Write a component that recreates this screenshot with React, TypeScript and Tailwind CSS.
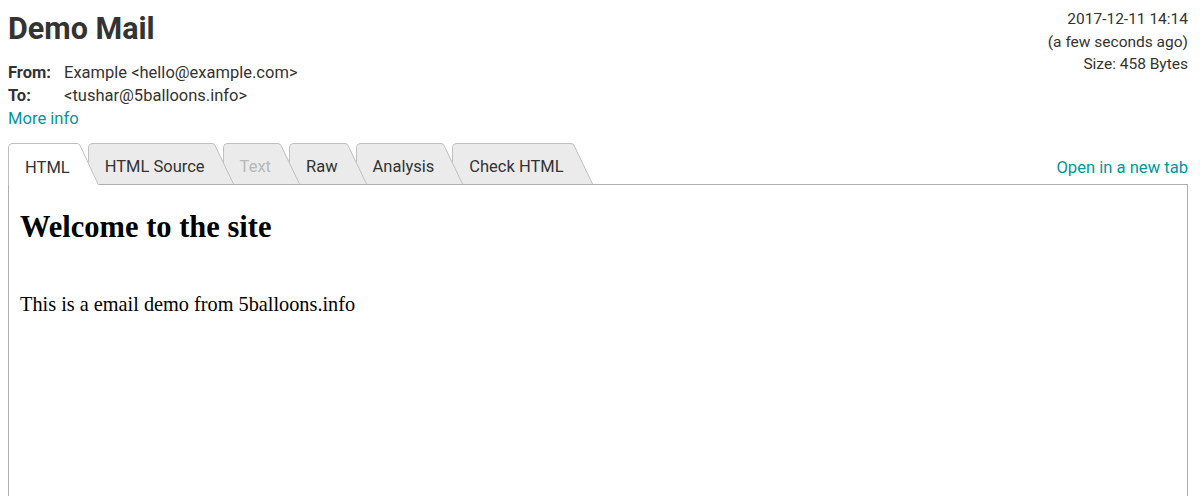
import React from 'react';

const ui = { fontFamily: 'Roboto, "Liberation Sans", Arial, sans-serif' };
const serif = { fontFamily: '"Liberation Serif", "Times New Roman", serif' };

type TabProps = {
  label: string;
  active?: boolean;
  disabled?: boolean;
  first?: boolean;
  z: string;
};

const Tab = ({ label, active, disabled, first, z }: TabProps) => {
  const h = active ? 42 : 41;
  const fill = active ? '#ffffff' : '#ebebeb';
  return (
    <div className={`relative flex ${z} ${first ? '' : '-ml-[11px]'} ${active ? 'h-[42px]' : 'h-[41px]'}`}>
      <div
        className={`flex items-center pl-4 pr-[6px] pt-[7px] border-l border-t border-[#c0c0c0] rounded-tl-[5px] text-[16.5px] whitespace-nowrap ${
          active ? 'bg-white' : 'bg-[#ebebeb]'
        } ${disabled ? 'text-[#b8b8b8]' : 'text-[#333]'}`}
      >
        {label}
      </div>
      <svg width="24" height={h} viewBox={`0 0 24 ${h}`} className="-ml-px block">
        <path d={`M0 0 H2 Q4.5 0 5.5 2.5 L24 ${h} H0 Z`} fill={fill} />
        <path d={`M0 0.5 H2 Q4.2 0.5 5.2 2.8 L23.5 ${h}`} fill="none" stroke="#c0c0c0" strokeWidth="1" />
      </svg>
    </div>
  );
};

const App = () => {
  return (
    <div className="min-h-screen bg-white pl-2 pr-[12px] text-[#333] overflow-hidden" style={ui}>
      {/* Header */}
      <div className="flex justify-between">
        <div>
          <h1 className="pt-3 text-[30.5px] leading-[34px] font-bold text-[#333]">Demo Mail</h1>
          <div className="mt-[15px] text-[16.5px] leading-[23px]">
            <div className="flex">
              <span className="w-[56px] font-bold">From:</span>
              <span>Example &lt;hello@example.com&gt;</span>
            </div>
            <div className="flex">
              <span className="w-[56px] font-bold">To:</span>
              <span>&lt;tushar@5balloons.info&gt;</span>
            </div>
            <a className="block text-[16.6px] text-[#00979d]">More info</a>
          </div>
        </div>
        <div className="pt-2 text-right text-[15.5px] leading-[22.5px]">
          <div>2017-12-11 14:14</div>
          <div>(a few seconds ago)</div>
          <div>Size: 458 Bytes</div>
        </div>
      </div>

      {/* Tabs */}
      <div className="relative z-10 mt-[13px] flex items-start justify-between h-[42px]">
        <div className="flex items-start">
          <Tab label="HTML" active first z="z-[6]" />
          <Tab label="HTML Source" z="z-[5]" />
          <Tab label="Text" disabled z="z-[4]" />
          <Tab label="Raw" z="z-[3]" />
          <Tab label="Analysis" z="z-[2]" />
          <Tab label="Check HTML" z="z-[1]" />
        </div>
        <a className="pt-[13px] text-[16.6px] text-[#00979d] whitespace-nowrap">Open in a new tab</a>
      </div>

      {/* Message frame */}
      <div className="-mt-px h-[400px] border-l border-r border-t border-[#aeaeae] px-[11px] pt-[25px] text-black" style={serif}>
        <h2 className="text-[30.5px] leading-[34px] font-bold">Welcome to the site</h2>
        <p className="mt-[48px] text-[20.3px] leading-[24px]">This is a email demo from 5balloons.info</p>
      </div>
    </div>
  );
};

export default App;
